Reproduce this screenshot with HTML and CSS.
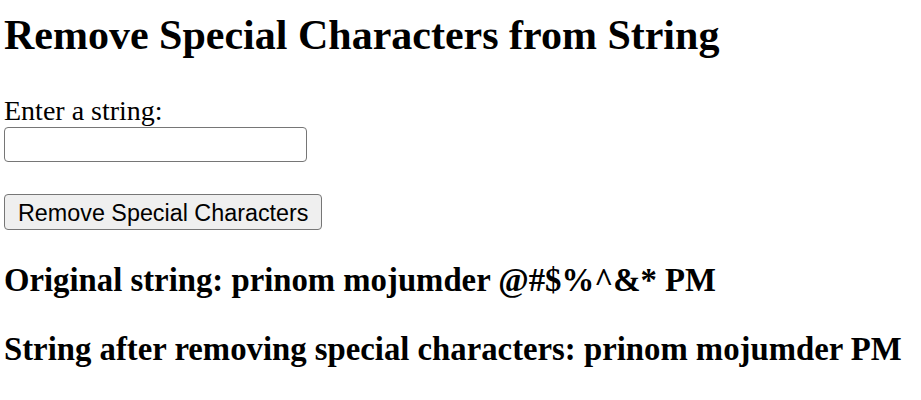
FILE: index.html
```html
<!DOCTYPE html>
<html lang="en">
<head>
<meta charset="utf-8">
<title>Remove Special Characters from String</title>
<link rel="stylesheet" href="styles.css">
</head>
<body>
<h1 class="title">Remove Special Characters from String</h1>
<label class="field-label" for="inputString">Enter a string:</label>
<input class="text-input" id="inputString" type="text">
<button class="action-btn" type="button">Remove Special Characters</button>
<h3 class="result">Original string: prinom mojumder @#$%^&amp;* PM</h3>
<h3 class="result result-second">String after removing special characters: prinom mojumder PM</h3>
</body>
</html>
```
FILE: styles.css
```css
html, body {
  background: #ffffff;
}
body {
  margin: 0;
  padding: 11px 0 0 4px;
  font-family: "Liberation Serif", "Times New Roman", serif;
  color: #000000;
  display: flex;
  flex-direction: column;
  align-items: flex-start;
}
.title {
  margin: 0;
  font-size: 42px;
  line-height: 48px;
  font-weight: bold;
}
.field-label {
  display: block;
  margin-top: 36px;
  font-size: 28px;
  line-height: 32px;
}
.text-input {
  box-sizing: border-box;
  width: 303px;
  height: 35px;
  margin: 0;
  padding: 2px 4px;
  border: 1.5px solid #767676;
  border-radius: 4px;
  background: #ffffff;
  font-family: "Liberation Sans", Arial, sans-serif;
  font-size: 23px;
}
.action-btn {
  box-sizing: border-box;
  height: 36px;
  margin: 32px 0 0 0;
  padding: 2px 13px 0 13px;
  border: 1.5px solid #767676;
  border-radius: 4px;
  background: #efefef;
  color: #000000;
  font-family: "Liberation Sans", Arial, sans-serif;
  font-size: 23.33px;
  line-height: 28px;
}
.result {
  margin: 31px 0 0 0;
  font-size: 32.76px;
  line-height: 38px;
  font-weight: bold;
}
```
